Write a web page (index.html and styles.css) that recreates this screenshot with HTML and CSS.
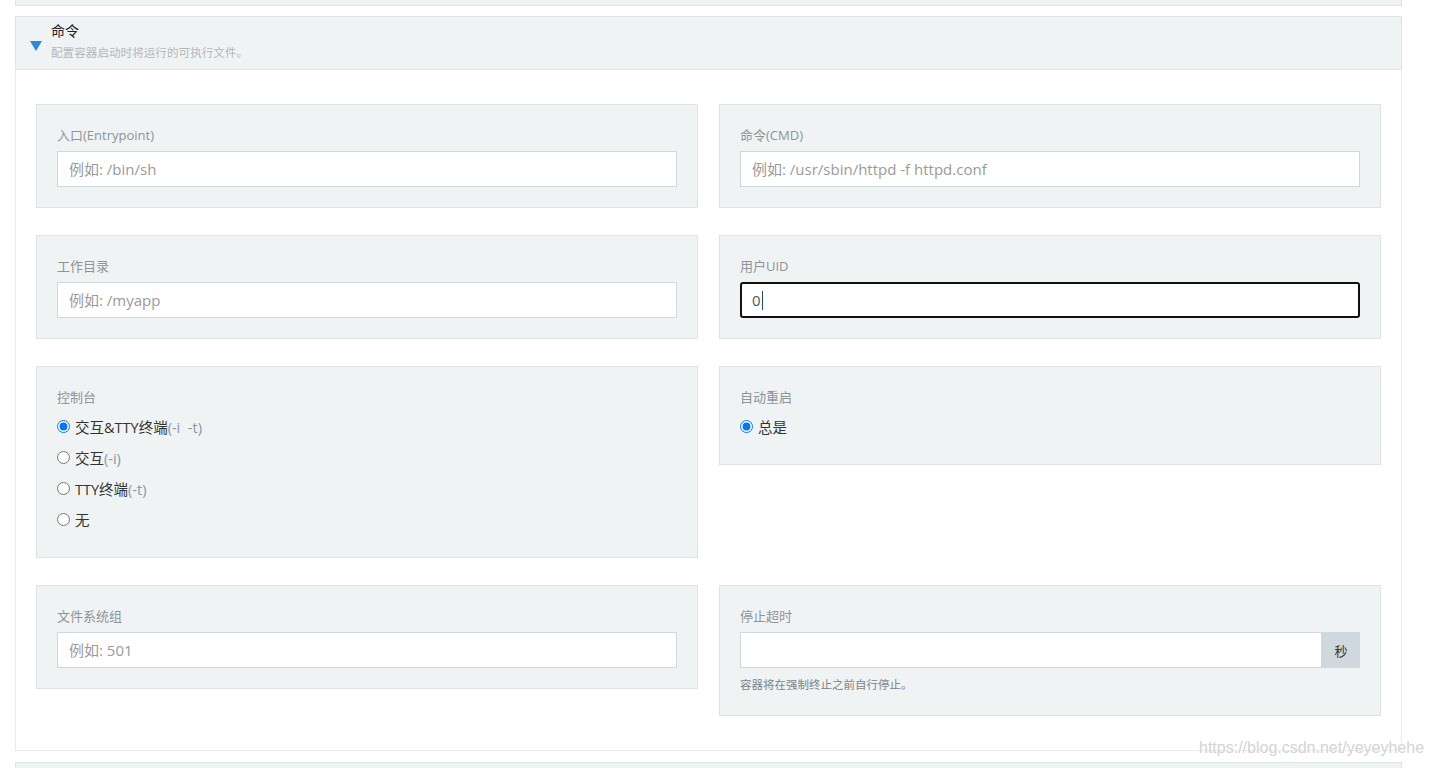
FILE: index.html
```html
<!DOCTYPE html>
<html lang="zh-CN">
<head>
<meta charset="utf-8">
<title>命令</title>
<link rel="stylesheet" href="styles.css">
</head>
<body>
<div class="page">
  <div class="prev-box"></div>

  <section class="accordion">
    <header class="acc-head">
      <svg class="caret" width="12" height="10" viewBox="0 0 12 10"><polygon points="0,0 12,0 6,10" fill="#2d8ad6"/></svg>
      <div class="acc-titles">
        <div class="acc-title">命令</div>
        <div class="acc-sub">配置容器启动时将运行的可执行文件。</div>
      </div>
    </header>

    <div class="acc-body">
      <div class="card">
        <label class="lbl">入口(Entrypoint)</label>
        <input class="inp" type="text" placeholder="例如: /bin/sh">
      </div>
      <div class="card">
        <label class="lbl">命令(CMD)</label>
        <input class="inp" type="text" placeholder="例如: /usr/sbin/httpd -f httpd.conf">
      </div>

      <div class="card">
        <label class="lbl">工作目录</label>
        <input class="inp" type="text" placeholder="例如: /myapp">
      </div>
      <div class="card">
        <label class="lbl">用户UID</label>
        <div class="inp inp-focus">0<span class="cursor"></span></div>
      </div>

      <div class="card card-radios">
        <label class="lbl">控制台</label>
        <label class="radio"><input type="radio" name="tty" checked><span>交互&amp;TTY终端<em>(-i&nbsp; -t)</em></span></label>
        <label class="radio"><input type="radio" name="tty"><span>交互<em>(-i)</em></span></label>
        <label class="radio"><input type="radio" name="tty"><span>TTY终端<em>(-t)</em></span></label>
        <label class="radio"><input type="radio" name="tty"><span>无</span></label>
      </div>
      <div class="card card-radios">
        <label class="lbl">自动重启</label>
        <label class="radio"><input type="radio" name="restart" checked><span>总是</span></label>
      </div>

      <div class="card">
        <label class="lbl">文件系统组</label>
        <input class="inp" type="text" placeholder="例如: 501">
      </div>
      <div class="card">
        <label class="lbl">停止超时</label>
        <div class="group">
          <input class="inp inp-grow" type="text">
          <span class="addon">秒</span>
        </div>
        <p class="help">容器将在强制终止之前自行停止。</p>
      </div>
    </div>
  </section>

  <div class="next-box"></div>
</div>
<div class="watermark">https://blog.csdn.net/yeyeyhehe</div>
</body>
</html>
```

FILE: styles.css
```css
* { box-sizing: border-box; }
html, body { margin: 0; padding: 0; background: #fff; }
body {
  font-family: "Open Sans", "Noto Sans CJK SC", sans-serif;
  color: #333;
  height: 768px;
  overflow: hidden;
  position: relative;
}
.page {
  padding-left: 15px;
  width: 1402px;
}
.prev-box {
  height: 6px;
  background: #f0f3f4;
  border: 1px solid #dde3e6;
  border-top: 0;
}
.accordion {
  margin-top: 10px;
}
.acc-head {
  display: flex;
  align-items: center;
  height: 54px;
  background: #eff3f4;
  border: 1px solid #dde3e6;
  padding-left: 14px;
}
.caret {
  margin-top: 6px;
  margin-right: 9px;
  flex: none;
}
.acc-titles {
  display: flex;
  flex-direction: column;
  margin-top: -4px;
}
.acc-title {
  font-size: 14px;
  line-height: 20px;
  color: #222;
}
.acc-sub {
  font-size: 11.6px;
  line-height: 16px;
  color: #b3b7ba;
  margin-top: 4px;
}
.acc-body {
  border: 1px solid #e9eced;
  border-top: 0;
  padding: 34px 20px 34px 20px;
  display: grid;
  grid-template-columns: 1fr 1fr;
  column-gap: 21px;
  row-gap: 27px;
  align-items: start;
}
.card {
  background: #f0f3f4;
  border: 1px solid #dde3e6;
  padding: 20px;
  display: flex;
  flex-direction: column;
}
.card-radios {
  padding-bottom: 22px;
}
.card-radios .lbl {
  margin-bottom: 4px;
}
.lbl {
  font-size: 13px;
  line-height: 20px;
  height: 20px;
  color: #8e9497;
  margin-bottom: 6px;
}
.inp {
  height: 36px;
  width: 100%;
  border: 1px solid #cfd8dc;
  background: #fff;
  font-family: "Open Sans", "Noto Sans CJK SC", sans-serif;
  font-size: 15px;
  color: #333;
  padding: 0 11px;
  outline: none;
  border-radius: 0;
}
.inp::placeholder { color: #9a9a9a; }
.inp-focus {
  border: 2px solid #111;
  border-radius: 3px;
  padding: 0 10px;
  display: flex;
  align-items: center;
  color: #555;
}
.cursor {
  display: inline-block;
  width: 1px;
  height: 19px;
  background: #1f4e79;
  margin-left: 1px;
}
.radio {
  display: flex;
  align-items: center;
  height: 31px;
  font-size: 14.5px;
  color: #333;
}
.radio input {
  margin: 0 5px 0 0;
  width: 13px;
  height: 13px;
}
.radio em {
  font-style: normal;
  color: #8a98a1;
}
.group {
  display: flex;
  height: 36px;
}
.inp-grow {
  flex: 1;
  min-width: 0;
}
.addon {
  width: 38px;
  flex: none;
  background: #cfd8dc;
  display: flex;
  align-items: center;
  justify-content: center;
  font-size: 13px;
  color: #333;
}
.help {
  margin: 7px 0 0 0;
  font-size: 11.5px;
  line-height: 20px;
  color: #7d8386;
}
.next-box {
  margin-top: 11px;
  height: 20px;
  background: #f0f3f4;
  border: 1px solid #dde3e6;
  border-bottom: 0;
}
.watermark {
  position: absolute;
  left: 1199px;
  top: 739px;
  font-family: "Liberation Sans", Arial, sans-serif;
  font-size: 16px;
  color: #d2d4d5;
  text-shadow: 0 0 1px #fff;
}
```
